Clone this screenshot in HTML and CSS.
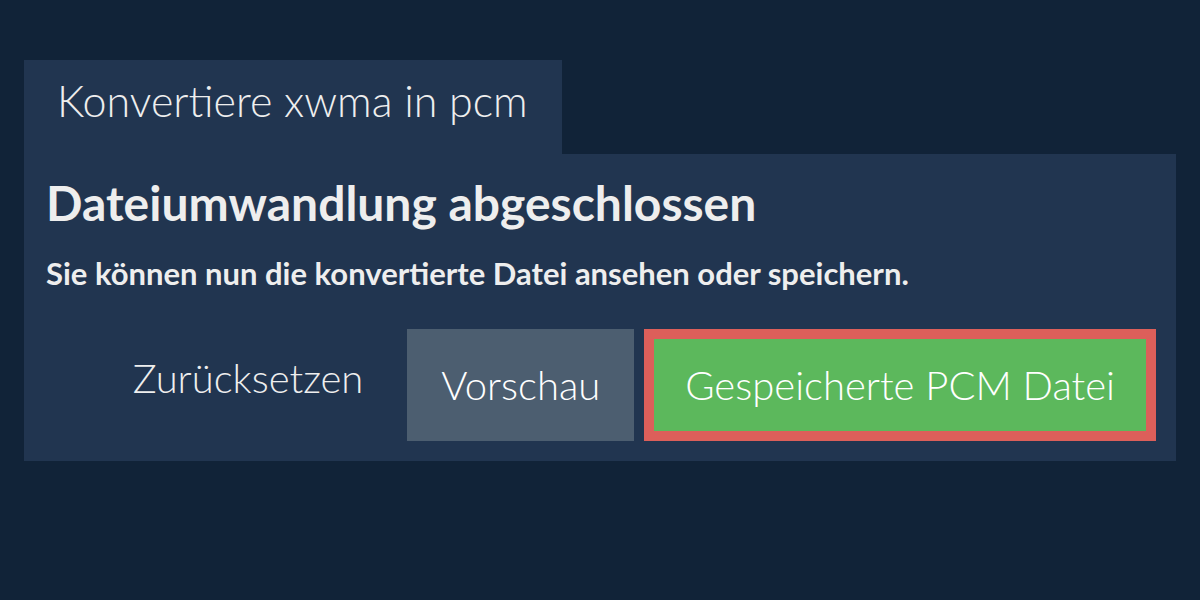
FILE: index.html
```html
<!DOCTYPE html>
<html lang="de">
<head>
<meta charset="utf-8">
<title>Konvertiere xwma in pcm</title>
<link rel="stylesheet" href="styles.css">
</head>
<body>
<main class="wrap">
  <div class="tab">Konvertiere xwma in pcm</div>
  <section class="panel">
    <h1 class="title">Dateiumwandlung abgeschlossen</h1>
    <p class="sub">Sie können nun die konvertierte Datei ansehen oder speichern.</p>
    <div class="actions">
      <button class="btn btn-link">Zurücksetzen</button>
      <button class="btn btn-grey">Vorschau</button>
      <button class="btn btn-green">Gespeicherte PCM Datei</button>
    </div>
  </section>
</main>
</body>
</html>
```

FILE: styles.css
```css
html, body {
  margin: 0;
  padding: 0;
  background: #112338;
  font-family: Lato, "Open Sans", sans-serif;
  color: #eeeeee;
}
.wrap {
  padding: 60px 24px 0 24px;
}
.tab {
  width: fit-content;
  background: #213550;
  height: 94px;
  box-sizing: border-box;
  padding: 0 34px 0 33px;
  font-size: 43px;
  font-weight: 300;
  line-height: 82px;
  white-space: nowrap;
}
.panel {
  background: #213550;
  padding: 20px 20px 20px 22px;
}
.title {
  margin: 0;
  font-size: 48px;
  font-weight: 700;
  line-height: 58px;
}
.sub {
  margin: 22px 0 0 0;
  font-size: 31px;
  font-weight: 700;
  line-height: 38px;
}
.actions {
  display: flex;
  justify-content: flex-end;
  gap: 10px;
  margin-top: 37px;
}
.btn {
  font-family: inherit;
  font-size: 40px;
  font-weight: 300;
  color: #ffffff;
  border: 0;
  height: 112px;
  padding: 0 34px;
  box-sizing: border-box;
  background: transparent;
}
.btn-link {
  color: #eeeeee;
  padding-bottom: 14px;
}
.btn-grey {
  background: #4c5e70;
}
.btn-green {
  background: #5cb85c;
  border: 10px solid #dc5f5a;
  padding: 0 31px;
}
```
